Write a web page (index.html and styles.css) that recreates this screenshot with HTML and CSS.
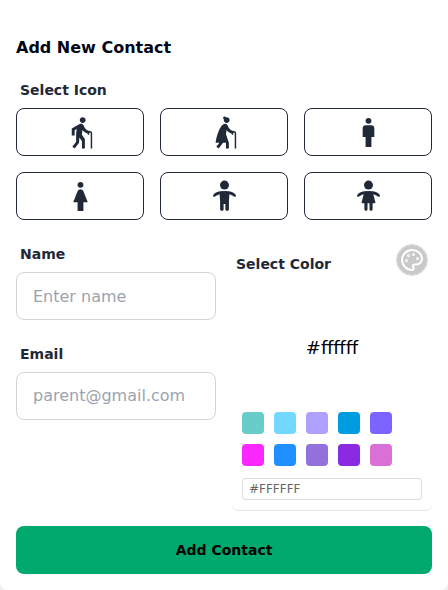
FILE: index.html
```html
<!DOCTYPE html>
<html lang="en">
<head>
<meta charset="utf-8">
<title>Add New Contact</title>
<link rel="stylesheet" href="styles.css">
</head>
<body>
<form class="card">
  <h3 class="title">Add New Contact</h3>
  <div class="label">Select Icon</div>
  <div class="icons">
    <button type="button" class="icon-btn" aria-label="Elderly man"><svg viewBox="0 0 24 24"><path d="M13.5,5.5c1.1,0,2-0.9,2-2s-0.9-2-2-2s-2,0.9-2,2S12.4,5.5,13.5,5.5z M20,12.5V23h-1V12.5c0-0.28-0.22-0.5-0.5-0.5S18,12.22,18,12.5v1h-1v-0.69c-1.46-0.38-2.7-1.29-3.51-2.52C13.18,11.16,13,12.07,13,13c0,0.23,0.02,0.46,0.03,0.69L15,16.5V23h-2v-5l-1.78-2.54L11,19l-3,4l-1.6-1.2L9,18.33V13c0-1.15,0.18-2.29,0.5-3.39L8,10.46V14H6V9.3l5.4-3.07l0,0.01c0.59-0.31,1.32-0.33,1.94,0.03c0.36,0.21,0.63,0.51,0.8,0.85l0,0l0.79,1.67C15.58,10.1,16.94,11,18.5,11C19.33,11,20,11.67,20,12.5z"/></svg></button>
    <button type="button" class="icon-btn" aria-label="Elderly woman"><svg viewBox="0 0 24 24"><path d="M18.5,11c-1.56,0-2.92-0.9-3.58-2.21l-0.79-1.67C14.12,7.1,13.63,6,12.34,6C8.72,6,6,16.69,6,19h2.5l-2.1,2.8L8,23l3-4h2v4h2v-4.03L13,13l0.49-2.71c0.81,1.23,2.05,2.14,3.51,2.52v0.69h1v-1c0-0.28,0.22-0.5,0.5-0.5s0.5,0.22,0.5,0.5V23h1V12.5C20,11.67,19.33,11,18.5,11z M11.6,2.91c-0.06,0.19-0.1,0.38-0.1,0.59c0,1.1,0.9,2,2,2s2-0.9,2-2s-0.9-2-2-2c-0.21,0-0.4,0.04-0.59,0.1c-0.15-0.34-0.49-0.58-0.88-0.58c-0.54,0-0.97,0.43-0.97,0.97C11.02,2.42,11.26,2.76,11.6,2.91z"/></svg></button>
    <button type="button" class="icon-btn" aria-label="Man"><svg viewBox="0 0 24 24"><path d="M14 7h-4c-1.1 0-2 .9-2 2v6h2v7h4v-7h2V9c0-1.1-.9-2-2-2z"/><circle cx="12" cy="4" r="2"/></svg></button>
    <button type="button" class="icon-btn" aria-label="Woman"><svg viewBox="0 0 24 24"><path d="M13.94 8.31C13.62 7.52 12.85 7 12 7s-1.62.52-1.94 1.31L7 16h3v6h4v-6h3l-3.06-7.69z"/><circle cx="12" cy="4" r="2"/></svg></button>
    <button type="button" class="icon-btn" aria-label="Boy"><svg viewBox="0 -.5 35 35"><circle cx="17.5" cy="5.6" r="4.5"/><path d="M13.2 11.8Q17.5 11.1 21.8 11.8C25 12.3 27.4 13.6 28.8 15.4C29.5 16.7 28.2 17.9 26.9 17.1C25.6 16 24 15.1 22.4 14.7L21.9 22V30.1Q21.9 31.2 20.8 31.2H19.5Q18.4 31.2 18.4 30.1V24.6H16.6V30.1Q16.6 31.2 15.5 31.2H14.2Q13.1 31.2 13.1 30.1V22L12.6 14.7C11 15.1 9.4 16 8.1 17.1C6.8 17.9 5.5 16.7 6.2 15.4C7.6 13.6 10 12.3 13.2 11.8Z"/></svg></button>
    <button type="button" class="icon-btn" aria-label="Girl"><svg viewBox="0 -.5 35 35"><circle cx="17.5" cy="5.6" r="4.5"/><path d="M13.2 11.8Q17.5 11.1 21.8 11.8C25 12.3 27.4 13.6 28.8 15.4C29.5 16.7 28.2 17.9 26.9 17.1C25.6 16 24 15.1 22.3 14.7L24.4 22.8Q24.5 23.8 23.5 23.8H21.6V30.1Q21.6 31.2 20.5 31.2H19.6Q18.5 31.2 18.5 30.1V23.8H16.5V30.1Q16.5 31.2 15.4 31.2H14.5Q13.4 31.2 13.4 30.1V23.8H11.5Q10.5 23.8 10.6 22.8L12.7 14.7C11 15.1 9.4 16 8.1 17.1C6.8 17.9 5.5 16.7 6.2 15.4C7.6 13.6 10 12.3 13.2 11.8Z"/></svg></button>
  </div>
  <div class="columns">
    <div class="fields">
      <div>
        <label class="label" for="name">Name</label>
        <input class="input" id="name" type="text" placeholder="Enter name">
      </div>
      <div>
        <label class="label" for="email">Email</label>
        <input class="input email" id="email" type="text" placeholder="parent@gmail.com">
      </div>
    </div>
    <div class="color">
      <div class="color-head">
        <div class="label">Select Color</div>
        <div class="palette"><svg viewBox="0 0 24 24"><circle cx="13.5" cy="6.5" r=".5"/><circle cx="17.5" cy="10.5" r=".5"/><circle cx="8.5" cy="7.5" r=".5"/><circle cx="6.5" cy="12.5" r=".5"/><path d="M12 2C6.5 2 2 6.5 2 12s4.5 10 10 10c.926 0 1.648-.746 1.648-1.688 0-.437-.18-.835-.437-1.125-.29-.289-.438-.652-.438-1.125a1.64 1.64 0 0 1 1.668-1.668h1.996c3.051 0 5.555-2.503 5.555-5.554C21.965 6.012 17.461 2 12 2z"/></svg></div>
      </div>
      <div class="picker">
        <div class="preview">#ffffff</div>
        <div class="picker-body">
          <div class="swatches">
            <span class="swatch teal"></span>
            <span class="swatch sky"></span>
            <span class="swatch lavender"></span>
            <span class="swatch cerulean"></span>
            <span class="swatch indigo"></span>
            <span class="swatch magenta"></span>
            <span class="swatch dodger"></span>
            <span class="swatch purple"></span>
            <span class="swatch violet"></span>
            <span class="swatch orchid"></span>
          </div>
          <input class="hex" type="text" value="#FFFFFF" aria-label="Hex color">
        </div>
      </div>
    </div>
  </div>
  <button type="button" class="submit">Add Contact</button>
</form>
</body>
</html>
```
FILE: styles.css
```css
*, *::before, *::after { box-sizing: border-box; }
body {
  margin: 0;
  background: #f0f0f0;
  font-family: "DejaVu Sans", sans-serif;
  color: #1f2937;
}
button, input { font-family: inherit; margin: 0; }
.card {
  height: 590px;
  padding: 36px 16px 16px;
  background: #fff;
  border-radius: 0 0 8px 8px;
}
.title {
  margin: 0 0 12px;
  font-size: 16px;
  line-height: 24px;
  font-weight: 700;
  color: #020617;
}
.label {
  display: block;
  padding: 8px 4px;
  font-size: 14px;
  line-height: 20px;
  font-weight: 600;
}
.icons {
  display: grid;
  grid-template-columns: repeat(3, 1fr);
  gap: 16px;
}
.icon-btn {
  display: flex;
  align-items: center;
  justify-content: center;
  height: 48px;
  padding: 0;
  border: 1px solid #1f2937;
  border-radius: 8px;
  background: #fff;
}
.icon-btn svg {
  width: 35px;
  height: 35px;
  fill: #1f2937;
}
.columns {
  display: grid;
  grid-template-columns: 1fr 1fr;
  gap: 16px;
  margin: 16px 0;
}
.fields {
  display: flex;
  flex-direction: column;
  gap: 16px;
}
.input {
  display: block;
  width: 100%;
  height: 48px;
  padding: 0 16px;
  border: 1px solid #d2d4d7;
  border-radius: 8px;
  background: #fff;
  font-size: 16px;
  color: #1f2937;
}
.input.email { padding-bottom: 2px; }
.input::placeholder { color: #9ca3af; opacity: 1; }
.color-head {
  display: flex;
  justify-content: space-between;
  align-items: center;
  height: 56px;
  padding-right: 4px;
}
.palette {
  display: flex;
  align-items: center;
  justify-content: center;
  width: 32px;
  height: 32px;
  margin-bottom: 8px;
  border: 1px solid #d5d9e0;
  border-radius: 50%;
  background: #c9c9c9;
  background-clip: padding-box;
}
.palette svg {
  flex: none;
  width: 24px;
  height: 24px;
  fill: none;
  stroke: #fff;
  stroke-width: 2;
  stroke-linecap: round;
  stroke-linejoin: round;
}
.picker {
  border-radius: 6px;
  background: #fff;
  box-shadow: 0 1px rgba(0, 0, 0, .1);
}
.preview {
  display: flex;
  align-items: center;
  justify-content: center;
  height: 110px;
  font-size: 18px;
  color: #000;
}
.picker-body { padding: 10px; }
.swatches {
  display: flex;
  flex-wrap: wrap;
  gap: 10px;
  width: 160px;
  margin-bottom: 12px;
}
.swatch {
  width: 22px;
  height: 22px;
  border-radius: 4px;
}
.teal { background: #68ccca; }
.sky { background: #73d8ff; }
.lavender { background: #aea1ff; }
.cerulean { background: #009ce0; }
.indigo { background: #7b64ff; }
.magenta { background: #fa28ff; }
.dodger { background: #1e90ff; }
.purple { background: #9370db; }
.violet { background: #8a2be2; }
.orchid { background: #da70d6; }
.hex {
  display: block;
  width: 100%;
  height: 22px;
  padding: 0 7px;
  border: 0;
  border-radius: 4px;
  background: #fff;
  box-shadow: inset 0 0 0 1px #ddd;
  font-size: 12px;
  color: #666;
}
.submit {
  display: block;
  width: 100%;
  height: 48px;
  padding: 0;
  border: 0;
  border-radius: 8px;
  background: #00a96e;
  font-size: 14px;
  font-weight: 600;
  color: #000;
}
```
